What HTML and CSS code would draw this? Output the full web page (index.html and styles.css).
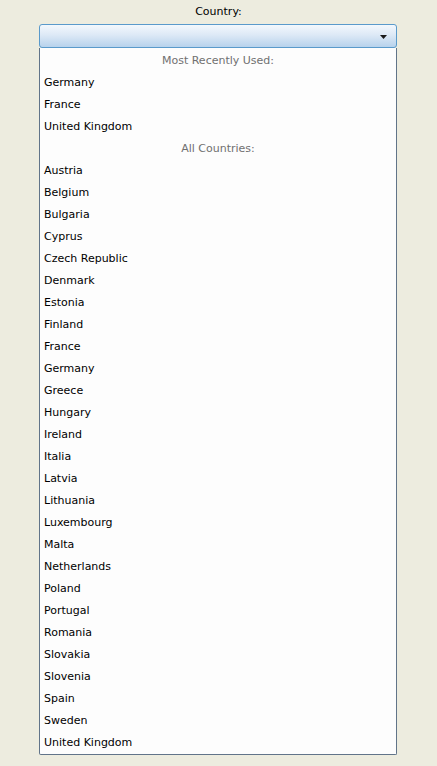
FILE: index.html
```html
<!DOCTYPE html>
<html>
<head>
<meta charset="utf-8">
<link rel="stylesheet" href="styles.css">
</head>
<body>
<div class="page">
  <div class="label">Country:</div>
  <div class="combo">
    <svg class="arrow" width="7" height="4" viewBox="0 0 7 4"><polygon points="0,0 7,0 3.5,4" fill="#1a1a1a"/></svg>
  </div>
  <div class="list">
    <div class="group">Most Recently Used:</div>
    <div class="item">Germany</div>
    <div class="item">France</div>
    <div class="item">United Kingdom</div>
    <div class="group">All Countries:</div>
    <div class="item">Austria</div>
    <div class="item">Belgium</div>
    <div class="item">Bulgaria</div>
    <div class="item">Cyprus</div>
    <div class="item">Czech Republic</div>
    <div class="item">Denmark</div>
    <div class="item">Estonia</div>
    <div class="item">Finland</div>
    <div class="item">France</div>
    <div class="item">Germany</div>
    <div class="item">Greece</div>
    <div class="item">Hungary</div>
    <div class="item">Ireland</div>
    <div class="item">Italia</div>
    <div class="item">Latvia</div>
    <div class="item">Lithuania</div>
    <div class="item">Luxembourg</div>
    <div class="item">Malta</div>
    <div class="item">Netherlands</div>
    <div class="item">Poland</div>
    <div class="item">Portugal</div>
    <div class="item">Romania</div>
    <div class="item">Slovakia</div>
    <div class="item">Slovenia</div>
    <div class="item">Spain</div>
    <div class="item">Sweden</div>
    <div class="item">United Kingdom</div>
  </div>
</div>
</body>
</html>
```
FILE: styles.css
```css
html, body {
  margin: 0;
  padding: 0;
  background: #edecdf;
}
body {
  font-family: "DejaVu Sans", Verdana, sans-serif;
  font-size: 11px;
  color: #000;
}
.page {
  width: 437px;
  height: 766px;
  box-sizing: border-box;
  padding: 4px 40px 0 39px;
  display: flex;
  flex-direction: column;
}
.label {
  text-align: center;
  height: 16px;
  line-height: 16px;
  margin-bottom: 4px;
  padding-left: 1px;
}
.combo {
  height: 24px;
  box-sizing: border-box;
  border: 1px solid #5a9acb;
  border-radius: 3px;
  background: linear-gradient(to bottom, #f3f8fd 0%, #dde9f6 45%, #b7d2ec 100%);
  display: flex;
  align-items: center;
  justify-content: flex-end;
  padding-right: 9px;
}
.arrow {
  display: block;
  margin-top: 1px;
}
.list {
  border: 1px solid #617489;
  border-top: none;
  border-radius: 0 0 2px 2px;
  background: #fdfdfd;
  padding-top: 2px;
  display: flex;
  flex-direction: column;
}
.group {
  height: 22px;
  line-height: 22px;
  text-align: center;
  color: #707070;
}
.item {
  height: 22px;
  line-height: 22px;
  padding-left: 4px;
}
```
